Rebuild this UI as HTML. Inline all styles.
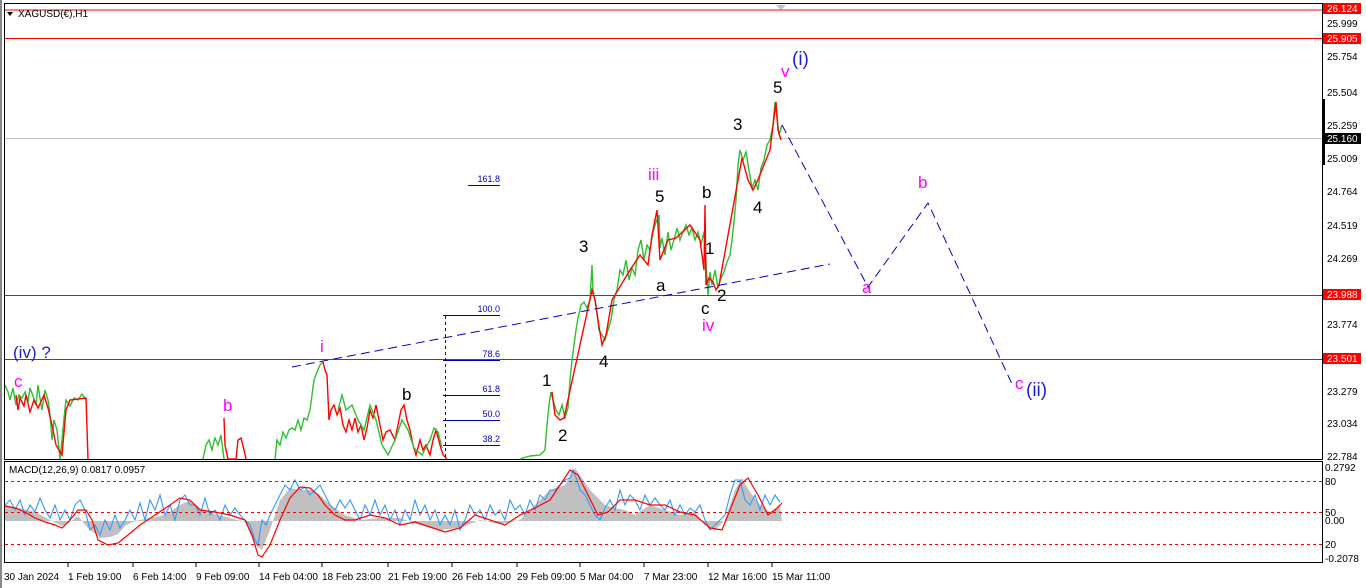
<!DOCTYPE html>
<html><head><meta charset="utf-8"><style>
html,body{margin:0;padding:0;background:#fff;width:1366px;height:588px;overflow:hidden}
svg{display:block}
text{font-family:"Liberation Sans",sans-serif}
.ax{font-size:10px;fill:#000}
.t{font-size:10px;fill:#000}
.w{font-size:17px}
</style></head><body>
<svg width="1366" height="588" viewBox="0 0 1366 588" xmlns="http://www.w3.org/2000/svg">
<rect x="0" y="0" width="1366" height="588" fill="#fff"/>
<rect x="0" y="0" width="2" height="588" fill="#888"/>
<rect x="4.5" y="3.5" width="1318" height="456" fill="none" stroke="#000"/>
<rect x="4.5" y="461.5" width="1318" height="101" fill="none" stroke="#000"/>
<line x1="5" y1="10" x2="1322" y2="10" stroke="#f00"/>
<line x1="5" y1="38.5" x2="1322" y2="38.5" stroke="#f00"/>
<line x1="5" y1="138.5" x2="1322" y2="138.5" stroke="#c0c0c0"/>
<line x1="5" y1="295.5" x2="1322" y2="295.5" stroke="#f00"/>
<line x1="5" y1="359.5" x2="1322" y2="359.5" stroke="#f00"/>
<polygon points="776,5 786,5 781,10" fill="#c0c0c0"/>
<polygon points="7,12 13,12 10,16" fill="#000"/>
<text x="18" y="17" class="t" font-size="9">XAGUSD(€),H1</text>
<g fill="none" stroke-width="1.4">
<polyline stroke="#2fbf2f" points="5,385 8,392 10,400 13,388 16,405 19,395 22,398 25,392 28,402 30,388 33,396 36,405 38,385 40,398 42,410 45,390 48,400 50,415 52,440 54,420 57,430 60,459 62,440 64,418 66,400 70,406 74,398 78,400 82,394 86,400"/>
<polyline stroke="#f00" points="16,395 18,410 20,398 24,406 26,395 30,412 34,400 38,408 44,395 48,408 52,425 56,445 62,455 66,410 70,400 86,398 88,459"/>
<polyline stroke="#2fbf2f" points="203,459 206,445 209,440 212,450 215,438 218,445 221,435 224,459"/>
<polyline stroke="#f00" points="224,418 225,445 228,459 236,459 238,440 241,438 244,450 246,459"/>
<polyline stroke="#2fbf2f" points="275,459 277,440 280,445 283,432 286,438 289,430 292,428 295,430 298,420 301,430 304,418 307,420 310,410 312,395 314,380 317,372 320,365 323,362"/>
<polyline stroke="#f00" points="323,362 325,370 327,375 329,420 331,410 334,405 337,415 340,408 343,425 346,432 349,420 352,430 355,418 358,432 361,425 364,440 367,428 370,410 373,418 376,405 380,425 383,440 386,432 390,430 395,440 398,425 401,410 404,405 407,420 410,430 413,445 416,455 420,440 423,450 426,445 430,455 433,440 436,430 440,445 443,455 447,459"/>
<polyline stroke="#2fbf2f" points="338,410 342,395 346,410 352,405 358,420 364,430 370,405 376,420 382,445 388,455 395,440 402,420 408,430 414,448 422,455 430,440 434,428 438,432 442,448"/>
<polyline stroke="#2fbf2f" points="520,459 530,456 540,455 545,450 547,425 549,405 551,392 553,400 556,410 559,415 562,405 565,418 568,408 570,380 572,360 574,345 576,330 578,318 581,305 584,302 587,308 590,300 592,265 593,290 596,305 599,330 602,335 605,340 608,330 611,320 614,300 617,290 620,270 623,275 626,260 629,280 632,268 635,275 638,250 641,240 644,260 647,245 650,250 653,232 656,222 659,215 660,248 662,238 665,255 668,232 671,250 674,240 677,228 680,240 683,232 686,225 689,235 692,228 695,240 698,232 701,245 704,232 706,262 708,295 710,272 712,285 715,270 718,288 721,278 724,272 727,262 730,255 732,240 734,222 736,200 738,165 740,150 743,160 746,152 749,170 752,188 755,180 758,190 761,168 764,160 767,145 770,140 773,125 775,102 777,118 779,135 782,125"/>
<polyline stroke="#f00" points="552,392 555,415 560,420 564,418 592,290 595,300 598,320 602,345 606,335 612,300 630,270 640,255 648,265 652,235 657,210 660,260 668,240 676,238 690,225 700,240 704,270 705,205 706,285 709,278 713,282 716,290 719,285 742,158 748,180 753,190 757,182 770,150 776,102 778,130 781,140"/>
</g>
<g stroke="#0000c8" fill="none">
<line x1="445.5" y1="316" x2="445.5" y2="459" stroke-dasharray="3,3"/>
<line x1="443" y1="315.5" x2="500" y2="315.5"/>
<line x1="443" y1="360.5" x2="500" y2="360.5"/>
<line x1="443" y1="395.5" x2="500" y2="395.5"/>
<line x1="443" y1="420.5" x2="500" y2="420.5"/>
<line x1="443" y1="445.5" x2="500" y2="445.5"/>
<line x1="468" y1="185.5" x2="500" y2="185.5"/>
<line x1="292" y1="367" x2="830" y2="264" stroke-dasharray="9,5"/>
<polyline points="782,125 868,287 928,203 1012,384" stroke-dasharray="9,5"/>
</g>
<g font-size="9" fill="#0000c8" text-anchor="end">
<text x="500" y="182">161.8</text><text x="500" y="312">100.0</text><text x="500" y="357">78.6</text><text x="500" y="392">61.8</text><text x="500" y="417">50.0</text><text x="500" y="442">38.2</text>
</g>
<g class="w">
<text x="792" y="65" fill="#1e1ed2" font-size="19">(i)</text>
<text x="781" y="77" fill="#f0f">v</text>
<text x="773" y="93" fill="#000">5</text>
<text x="733" y="130" fill="#000">3</text>
<text x="753" y="213" fill="#000">4</text>
<text x="648" y="180" fill="#f0f">iii</text>
<text x="655" y="202" fill="#000">5</text>
<text x="702" y="198" fill="#000">b</text>
<text x="705" y="254" fill="#000">1</text>
<text x="579" y="252" fill="#000">3</text>
<text x="656" y="291" fill="#000">a</text>
<text x="717" y="301" fill="#000">2</text>
<text x="701" y="314" fill="#000">c</text>
<text x="702" y="331" fill="#f0f">iv</text>
<text x="599" y="367" fill="#000">4</text>
<text x="542" y="386" fill="#000">1</text>
<text x="558" y="441" fill="#000">2</text>
<text x="320" y="352" fill="#f0f">i</text>
<text x="402" y="400" fill="#000">b</text>
<text x="223" y="411" fill="#f0f">b</text>
<text x="14" y="387" fill="#f0f">c</text>
<text x="13" y="358" fill="#1e1ed2">(iv) ?</text>
<text x="918" y="188" fill="#f0f">b</text>
<text x="862" y="293" fill="#f0f">a</text>
<text x="1015" y="389" fill="#f0f">c</text>
<text x="1026" y="396" fill="#1e1ed2" font-size="19">(ii)</text>
</g>
<g class="ax">
<rect x="1323" y="3" width="38" height="11" fill="#f00"/><text x="1327" y="12" fill="#fff">26.124</text>
<text x="1327" y="27">25.999</text>
<rect x="1323" y="33" width="38" height="11" fill="#f00"/><text x="1327" y="42" fill="#fff">25.905</text>
<text x="1327" y="60">25.754</text>
<text x="1327" y="96">25.504</text>
<text x="1327" y="129">25.259</text>
<rect x="1323" y="133" width="38" height="11" fill="#000"/><text x="1327" y="142" fill="#fff">25.160</text>
<text x="1327" y="162">25.009</text>
<text x="1327" y="195">24.764</text>
<text x="1327" y="229">24.519</text>
<text x="1327" y="262">24.269</text>
<rect x="1323" y="289" width="38" height="11" fill="#f00"/><text x="1327" y="298" fill="#fff">23.988</text>
<text x="1327" y="328">23.774</text>
<rect x="1323" y="353" width="38" height="11" fill="#f00"/><text x="1327" y="362" fill="#fff">23.501</text>
<text x="1327" y="395">23.279</text>
<text x="1327" y="427">23.034</text>
<text x="1327" y="460">22.784</text>
<text x="1325" y="471">0.2792</text>
<text x="1325" y="485">80</text>
<text x="1325" y="516">50</text>
<text x="1325" y="524">0.00</text>
<text x="1325" y="548">20</text>
<text x="1325" y="562">-0.2078</text>
</g>
<rect x="1323" y="99" width="2" height="66" fill="#000"/>
<text x="9" y="473" class="t" font-size="9">MACD(12,26,9) 0.0817 0.0957</text>
<path fill="#c0c0c0" d="M5,521 L5,505 20,508 35,512 50,520 62,526 70,522 78,516 88,528 100,538 110,537 118,534 125,526 135,521 150,518 165,515 180,505 190,500 200,508 215,514 230,518 245,522 255,545 262,550 270,530 280,500 290,488 300,490 312,490 320,495 330,505 345,515 360,520 380,518 400,518 420,525 440,530 460,528 480,520 500,524 520,520 535,505 550,490 565,485 575,468 590,490 605,505 615,508 625,510 635,515 650,505 665,510 680,515 695,512 705,525 715,530 725,520 735,490 742,478 750,492 760,505 770,512 780,505 782,521 Z"/>
<polyline fill="none" stroke="#3399ff" stroke-width="1.1" points="5,505 10,500 15,510 20,500 25,515 30,505 35,512 40,498 45,510 50,518 55,505 60,520 65,510 70,520 75,505 80,500 85,510 90,530 95,525 100,535 105,520 110,530 115,515 120,528 125,520 130,510 135,520 140,503 145,520 150,500 155,510 160,495 165,515 170,505 175,520 180,500 185,495 190,505 195,505 200,515 205,498 210,515 215,510 220,520 225,505 230,515 235,508 240,515 245,520 250,525 255,540 258,545 262,520 266,525 270,515 275,505 280,495 285,485 290,490 295,480 300,490 305,487 310,495 315,490 320,485 325,495 330,505 335,510 340,500 345,508 350,500 355,510 360,520 365,505 370,515 375,500 380,515 385,505 390,520 395,510 400,525 405,510 410,520 415,500 420,515 425,505 430,520 435,510 440,525 445,515 450,525 455,510 460,530 465,520 470,505 475,515 480,510 485,520 490,505 495,515 500,510 505,520 510,500 515,510 520,505 525,515 530,500 535,510 540,495 545,500 550,490 555,490 560,485 565,480 570,478 573,470 577,480 580,490 585,495 590,505 595,515 600,520 605,508 610,500 615,510 620,490 625,505 630,495 635,500 640,510 645,495 650,505 655,498 660,505 665,510 670,500 675,515 680,505 685,515 690,508 695,512 700,505 705,520 710,530 715,525 720,520 725,515 730,495 735,480 740,480 745,500 750,505 755,495 760,510 765,495 770,505 775,495 780,502"/>
<polyline fill="none" stroke="#f00" stroke-width="1.2" points="5,506 15,508 25,512 35,518 45,522 55,525 62,528 70,520 78,510 86,510 92,520 98,540 108,545 118,543 128,535 140,525 155,515 170,505 180,498 190,500 200,510 215,512 230,515 245,520 252,535 258,555 262,557 270,545 280,520 290,498 300,487 310,488 318,495 325,505 335,515 345,520 355,520 370,515 385,518 400,525 415,522 430,527 445,532 460,528 475,515 490,520 505,525 520,515 535,508 550,500 560,485 570,470 578,475 588,495 598,515 608,512 620,500 635,500 650,505 665,505 680,512 695,515 710,528 722,530 730,510 740,485 748,478 758,495 768,515 775,510 782,503"/>
<g stroke="#f00" stroke-dasharray="3,3">
<line x1="5" y1="481.5" x2="1322" y2="481.5"/>
<line x1="5" y1="512.5" x2="1322" y2="512.5"/>
<line x1="5" y1="544.5" x2="1322" y2="544.5"/>
</g>
<g class="ax" font-size="10.5">
<text x="4" y="580">30 Jan 2024</text>
<text x="68" y="580">1 Feb 19:00</text>
<text x="133" y="580">6 Feb 14:00</text>
<text x="196" y="580">9 Feb 09:00</text>
<text x="259" y="580">14 Feb 04:00</text>
<text x="322" y="580">18 Feb 23:00</text>
<text x="388" y="580">21 Feb 19:00</text>
<text x="452" y="580">26 Feb 14:00</text>
<text x="517" y="580">29 Feb 09:00</text>
<text x="580" y="580">5 Mar 04:00</text>
<text x="644" y="580">7 Mar 23:00</text>
<text x="708" y="580">12 Mar 16:00</text>
<text x="772" y="580">15 Mar 11:00</text>
</g>
<g stroke="#000">
<line x1="68" y1="563" x2="68" y2="567"/><line x1="133" y1="563" x2="133" y2="567"/><line x1="196" y1="563" x2="196" y2="567"/><line x1="259" y1="563" x2="259" y2="567"/><line x1="322" y1="563" x2="322" y2="567"/><line x1="388" y1="563" x2="388" y2="567"/><line x1="452" y1="563" x2="452" y2="567"/><line x1="517" y1="563" x2="517" y2="567"/><line x1="580" y1="563" x2="580" y2="567"/><line x1="644" y1="563" x2="644" y2="567"/><line x1="708" y1="563" x2="708" y2="567"/><line x1="772" y1="563" x2="772" y2="567"/>
</g>
</svg>
</body></html>
